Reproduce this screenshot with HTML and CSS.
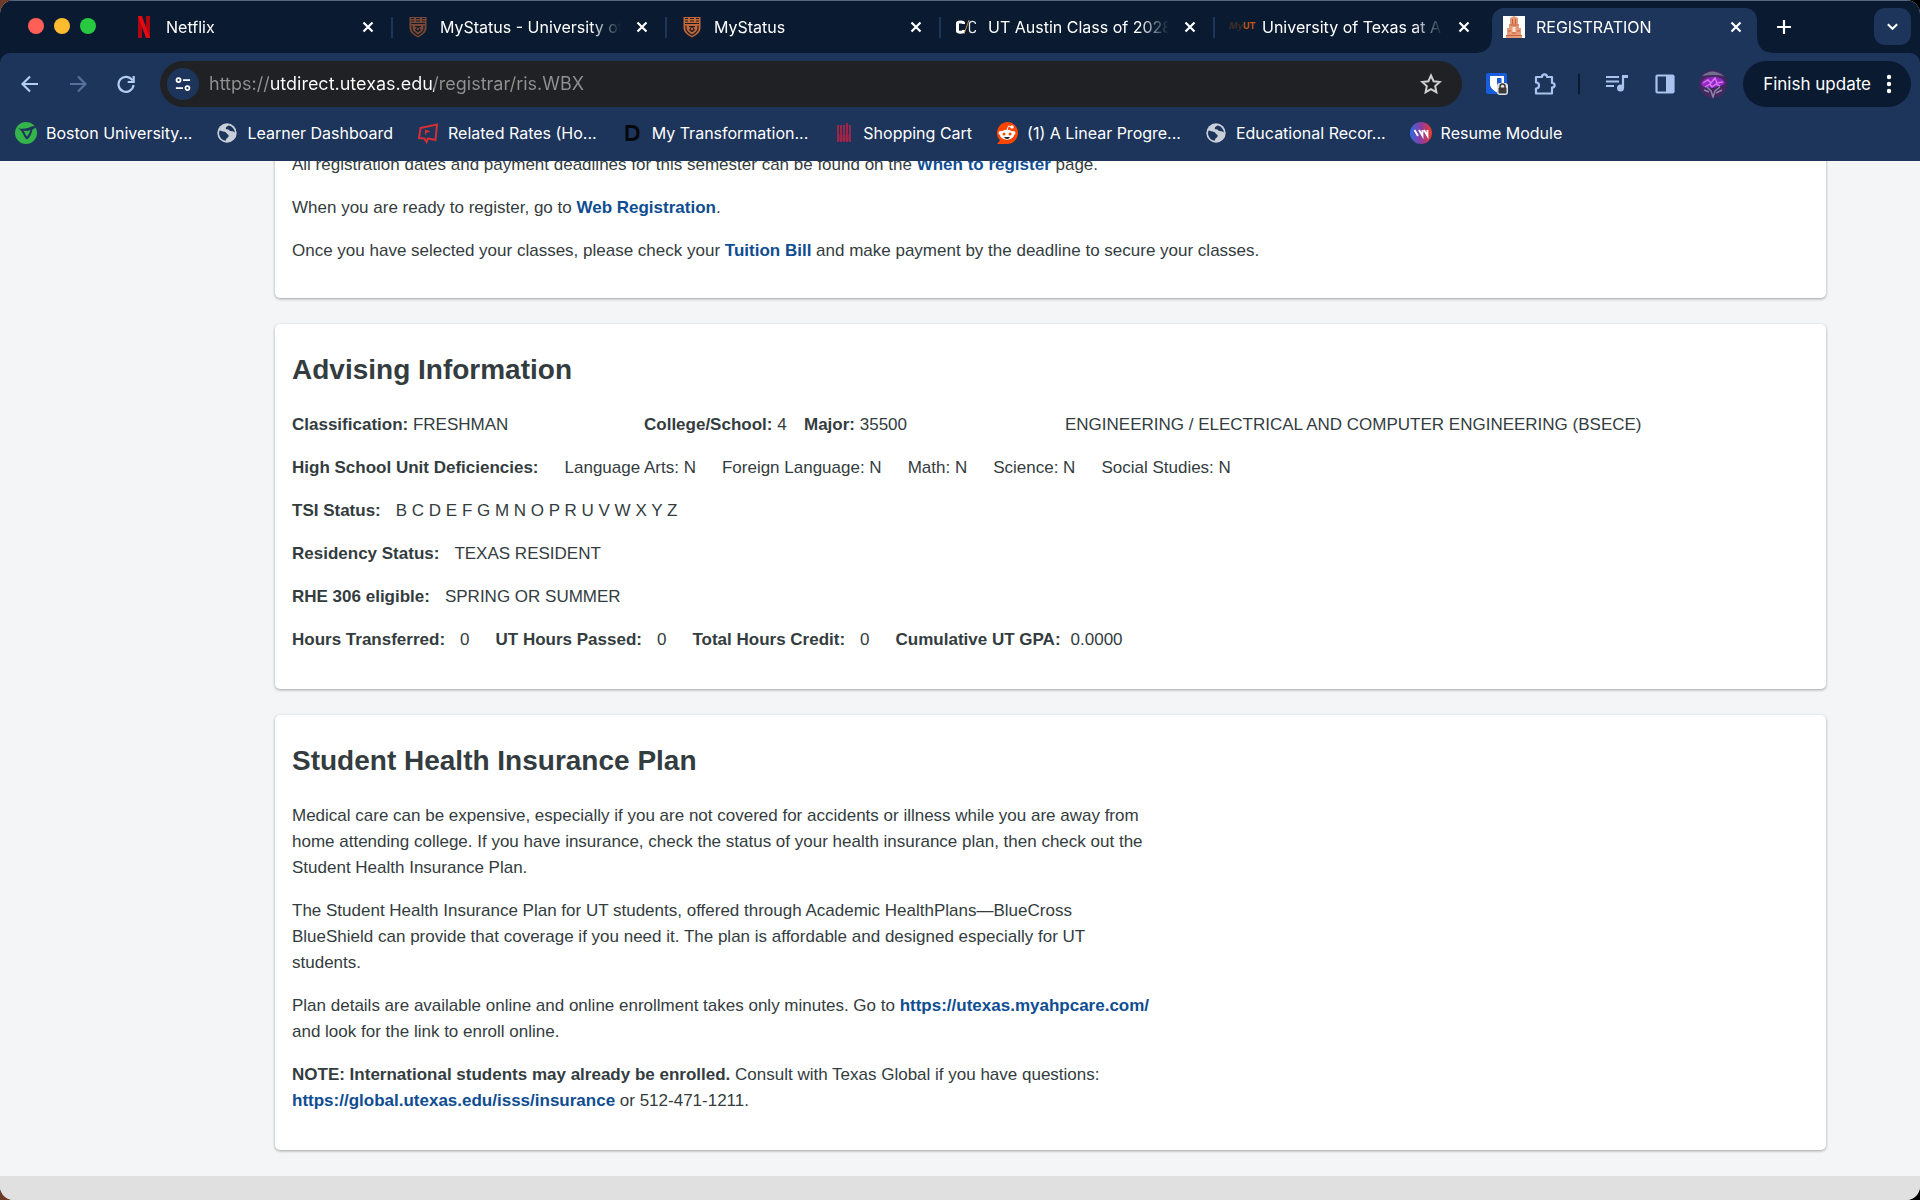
FILE: index.html
```html
<!DOCTYPE html>
<html lang="en">
<head>
  <meta charset="UTF-8">
  <meta name="viewport" content="width=device-width, initial-scale=1">
  <title>REGISTRATION</title>
  <link rel="stylesheet" href="styles.css">
</head>
<body>
  <!-- Shared icon shapes -->
  <svg class="sprite" aria-hidden="true">
    <symbol id="close" viewBox="0 0 12 12"><path d="M1.5 1.5l9 9M10.5 1.5l-9 9" stroke="currentColor" stroke-width="2.200" fill="none"/></symbol>
    <symbol id="shield" viewBox="0 0 22 22">
      <path d="M2.500 1h17v11c0 4.500-4.500 7.200-8.500 9.500C7 19.200 2.500 16.500 2.500 12z" fill="currentColor"/>
      <path d="M4 2.500h3M15 2.500h3M4 5h3M15 5h3M9 2.500h4M9 5h4M4 7.500h14M5 9.500v3c0 3 3 5 6 6.800 3-1.800 6-3.800 6-6.800v-3" stroke="#1b1d26" stroke-width="1.200" fill="none"/>
      <path d="M8 10.500h6M8 13.500l3 2.500 3-2.500" stroke="#1b1d26" fill="none"/>
      <circle cx="11" cy="13" r="1.800" stroke="#1b1d26" fill="none"/>
    </symbol>
    <symbol id="globe" viewBox="0 0 22 22">
      <circle cx="11" cy="11" r="9.700" fill="#c9d0da"/>
      <path d="M3.500 8.500c2 .2 3.500 1.200 5 1.300 2 .1 2 2.200 3.200 2.700 1.800.8.800 3-.7 3.500-1 .5-.6 2-1.500 2.700C5.500 18 3 14.500 3 11zM12.500 3.500c-1.500 1-2.800 1.500-2.700 3 .5 1.300 2.200.6 3.200 1.500.6 1.500 2.400 1 3.800 1.300l2.100 1.200C18.700 7 16 4 12.500 3.500z" fill="#1d355b"/>
    </symbol>
  </svg>

  <div class="window">
    <header class="chrome">
      <!-- Tab strip -->
      <div class="tab-strip">
        <div class="lights">
          <button class="light red" aria-label="Close window"></button>
          <button class="light yellow" aria-label="Minimize window"></button>
          <button class="light green" aria-label="Zoom window"></button>
        </div>
        <div class="tab">
          <svg class="favicon" viewBox="0 0 22 22"><path d="M5 0h4v22l-4 .5zM13 0h4v22.500L13 22z" fill="#b1060f"/><path d="M5 0h4l8 22.500-4-.5z" fill="#e50914"/></svg>
          <button class="tab-title">Netflix</button>
          <button class="tab-close" aria-label="Close tab"><svg><use href="#close"/></svg></button>
        </div>
        <div class="tab">
          <svg class="favicon shield dim"><use href="#shield"/></svg>
          <button class="tab-title">MyStatus - University of Texas</button>
          <button class="tab-close" aria-label="Close tab"><svg><use href="#close"/></svg></button>
        </div>
        <div class="tab">
          <svg class="favicon shield"><use href="#shield"/></svg>
          <button class="tab-title">MyStatus</button>
          <button class="tab-close" aria-label="Close tab"><svg><use href="#close"/></svg></button>
        </div>
        <div class="tab">
          <svg class="favicon" viewBox="0 0 22 22"><path d="M8.500 8V7c0-1.500-6-1.500-6 0v8c0 1.500 6 1.500 6 0v-1" stroke="#fff" stroke-width="3" fill="none"/><path d="M14 4L9 18" stroke="#c88a4a" stroke-width="1"/><path d="M20.500 8c0-3.500-6-3.500-6 0v6c0 3.500 6 3.500 6 0" stroke="#e4e7ec" stroke-width="1.300" fill="none"/></svg>
          <button class="tab-title">UT Austin Class of 2028</button>
          <button class="tab-close" aria-label="Close tab"><svg><use href="#close"/></svg></button>
        </div>
        <div class="tab last">
          <span class="favicon myut"><i>My</i>UT</span>
          <button class="tab-title">University of Texas at Austin</button>
          <button class="tab-close" aria-label="Close tab"><svg><use href="#close"/></svg></button>
        </div>
        <div class="tab active">
          <svg class="favicon" viewBox="0 0 22 22"><path d="M0 0h22v22H0z" fill="#fff"/><path d="M7 2l4-2 4 2v6h1v4h2v7h1v3H3v-3h1v-7h2V8h1z" fill="#e79a78"/><path d="M9.500 3v5M12.500 3v5M7 9h8M5 15h3M14 15h3M3 19.500h16M9 17h4" stroke="#c4603c" fill="none"/><path d="M9.500 11h3v5h-3z" fill="#fbe3d8"/></svg>
          <button class="tab-title">REGISTRATION</button>
          <button class="tab-close" aria-label="Close tab"><svg><use href="#close"/></svg></button>
        </div>
        <button class="new-tab" aria-label="New tab"><svg viewBox="0 0 14 14"><path d="M7 0v14M0 7h14" stroke="currentColor" stroke-width="2.200"/></svg></button>
        <button class="tab-search" aria-label="Search tabs"><svg viewBox="0 0 14 14"><path d="M2 4.500l5 5 5-5" stroke="currentColor" stroke-width="2.200" fill="none"/></svg></button>
      </div>

      <!-- Toolbar -->
      <div class="toolbar">
        <nav class="nav-buttons">
          <button aria-label="Back"><svg viewBox="0 0 18 18"><path d="M17 9H2M9 1.500L1.500 9 9 16.500" stroke="currentColor" stroke-width="2.200" fill="none"/></svg></button>
          <button class="disabled" aria-label="Forward" disabled><svg viewBox="0 0 18 18"><path d="M1 9h15M9 1.500L16.500 9 9 16.500" stroke="currentColor" stroke-width="2.200" fill="none"/></svg></button>
          <button aria-label="Reload"><svg viewBox="0 0 18 18"><path d="M15.500 5.500A7.500 7.500 0 1 0 16.500 10" stroke="currentColor" stroke-width="2.200" fill="none"/><path d="M16.700 1v6h-6" stroke="currentColor" stroke-width="2.200" fill="none"/></svg></button>
        </nav>
        <div class="omnibox">
          <button class="site-info" aria-label="Site information"><svg viewBox="0 0 18 16"><g stroke="#fff" stroke-width="2" fill="none"><circle cx="4" cy="3.500" r="2.300"/><path d="M9 3.500h8M1 12.500h8"/><circle cx="14" cy="12.500" r="2.300"/></g></svg></button>
          <input class="url" type="text" aria-label="Address" value="https://utdirect.utexas.edu/registrar/ris.WBX">
          <button class="star" aria-label="Bookmark this tab"><svg viewBox="0 0 22 22"><path d="M11 2.500l2.600 5.700 6.200.7-4.600 4.200 1.200 6.100L11 16.100l-5.400 3.100 1.200-6.100-4.600-4.200 6.200-.7z" stroke="currentColor" stroke-width="2" fill="none"/></svg></button>
        </div>
        <div class="extensions">
          <button aria-label="Password manager"><svg viewBox="0 0 22 22"><rect width="21" height="21" rx="2" fill="#175ddc"/><path d="M4 3h14v8c0 4-4 6.500-7 8.500-3-2-7-4.500-7-8.500z" fill="#fff"/><path d="M11 5v11.500c2.500-1.500 4.500-3 4.500-5.500V5z" fill="#175ddc"/><rect x="11" y="10" width="11" height="12" rx="3" fill="#e3e3e3"/><path d="M14 15v-1.500a2.500 2.500 0 0 1 5 0V15" stroke="#3b3b3b" stroke-width="1.500" fill="none"/><rect x="12.500" y="14.500" width="8" height="6" rx="1" fill="#3b3b3b"/></svg></button>
          <button aria-label="Extensions"><svg viewBox="0 0 22 22"><path d="M2 4h6c0-3.500 5-3.500 5 0h5v6c3.500 0 3.500 4.500 0 4.500V20.500H2v-5c4 0 4-6 0-6z" stroke="currentColor" stroke-width="2.200" stroke-linejoin="round" fill="none"/></svg></button>
          <span class="divider"></span>
          <button aria-label="Media controls"><svg viewBox="0 0 22 22"><path d="M0 4h13M0 8.500h13M0 13h8M17 3v12" stroke="currentColor" stroke-width="2.200"/><path d="M16 2h6v3h-6z" fill="currentColor"/><circle cx="14.500" cy="15" r="3.500" fill="currentColor"/></svg></button>
          <button aria-label="Side panel"><svg viewBox="0 0 22 22"><rect x="2.500" y="2.500" width="17" height="17" rx="1" stroke="currentColor" stroke-width="2.200" fill="none"/><path d="M12 2h8v18h-8z" fill="currentColor"/></svg></button>
          <button class="avatar" aria-label="Profile"><svg viewBox="0 0 28 28"><circle cx="14" cy="14" r="14" fill="#43285f"/><path d="M3 6q10-9 22 0-10-2-22 0" fill="#70708e"/><path d="M2 14q3-7 11-7 10-1 13 6-3 4-7 3-5 3-9 1-5 2-8-3" fill="#8f2bc2"/><path d="M4 13l5-3 3 3 4-5 2 5 6-1M6 17l5-3 2 3 4-3 4 2" stroke="#dc74f5" stroke-width="1.400" fill="none"/><path d="M8 17l4 4 2 6 2-6 5-4M5 20l5 2M23 20l-6 3" stroke="#8b84a6" stroke-width="1.500" fill="none"/></svg></button>
        </div>
        <button class="update">Finish update
          <svg viewBox="0 0 6 20"><g fill="currentColor"><circle cx="3" cy="3" r="2.200"/><circle cx="3" cy="10" r="2.200"/><circle cx="3" cy="17" r="2.200"/></g></svg>
        </button>
      </div>

      <!-- Bookmarks bar -->
      <nav class="bookmarks">
        <a href="#"><svg viewBox="0 0 22 22"><circle cx="11" cy="11" r="11" fill="#34b44a"/><path d="M3 6c5 2 10 0 15-2l4 1-4.500 2.500C16.500 12 15 15.500 12 17.500 8 15 9 10 3 6z" fill="#1d355b"/><path d="M8.500 8.500c2 .8 5 .3 7-.5-1 3-2 5-3.500 6.500C10.500 13 9.800 10.500 8.500 8.500z" fill="#34b44a"/></svg>Boston University...</a>
        <a href="#"><svg><use href="#globe"/></svg>Learner Dashboard</a>
        <a href="#"><svg viewBox="0 0 22 22"><path d="M3.500 6L20 2.500 18.500 18l-7.500-1.500-1.500 3.500-2-3.500L2 16z" stroke="#d32f35" stroke-width="2" fill="none"/><path d="M8 7.500l5.500 1.800-4 1.700-1.500 3z" fill="#d32f35"/></svg>Related Rates (Ho...</a>
        <a href="#"><svg viewBox="0 0 22 22"><path d="M6 4.500h4.500c4.500 0 6.500 2.500 6.500 6.500s-2 6.500-6.500 6.500H6z" stroke="#05070b" stroke-width="3" fill="none"/></svg>My Transformation...</a>
        <a href="#"><svg viewBox="0 0 22 22"><path d="M6 3v17M9 3v17M12 3v17M15 1v19M18 3v17" stroke="#a02447" stroke-width="2"/><path d="M5 13h14v6H5z" fill="#a02447" opacity=".6"/></svg>Shopping Cart</a>
        <a href="#"><svg viewBox="0 0 22 22"><path d="M11 0a11 11 0 1 1 0 22H1l3-3.500A11 11 0 0 1 11 0z" fill="#ff4500"/><path d="M11 8l1.500-4 3 1" stroke="#fff" fill="none"/><circle cx="16" cy="5" r="1.700" fill="#fff"/><circle cx="4.500" cy="11" r="2" fill="#fff"/><circle cx="17.500" cy="11" r="2" fill="#fff"/><ellipse cx="11" cy="12.800" rx="7" ry="5" fill="#fff"/><circle cx="8" cy="12" r="1.500" fill="#ff4500"/><circle cx="14" cy="12" r="1.500" fill="#ff4500"/><path d="M8 15h6c-1 2.500-5 2.500-6 0z" fill="#222"/></svg>(1) A Linear Progre...</a>
        <a href="#"><svg><use href="#globe"/></svg>Educational Recor...</a>
        <a href="#"><svg viewBox="0 0 22 22"><defs><linearGradient id="resume"><stop offset="0" stop-color="#2c6be0"/><stop offset=".5" stop-color="#8d3ca0"/><stop offset="1" stop-color="#ef3b2d"/></linearGradient></defs><circle cx="11" cy="11" r="11" fill="url(#resume)"/><path d="M4.500 8l3.500 6M9 8l3.500 6V8M14 8l3.500 6V8" stroke="#fff" stroke-width="1.800" fill="none"/></svg>Resume Module</a>
      </nav>
    </header>

    <!-- Page, scrolled down to the advising section -->
    <div class="page">
      <main class="content">
        <section class="card">
          <p>All registration dates and payment deadlines for this semester can be found on the <a href="#">When to register</a> page.</p>
          <p>When you are ready to register, go to <a href="#">Web Registration</a>.</p>
          <p>Once you have selected your classes, please check your <a href="#">Tuition Bill</a> and make payment by the deadline to secure your classes.</p>
        </section>

        <section class="card titled">
          <h2>Advising Information</h2>
          <div class="major-row">
            <span><b>Classification:</b> FRESHMAN</span>
            <span><b>College/School:</b> 4</span>
            <span><b>Major:</b> 35500</span>
            <span>ENGINEERING / ELECTRICAL AND COMPUTER ENGINEERING (BSECE)</span>
          </div>
          <div class="row">
            <b>High School Unit Deficiencies:</b>
            <span>Language Arts: N</span>
            <span>Foreign Language: N</span>
            <span>Math: N</span>
            <span>Science: N</span>
            <span>Social Studies: N</span>
          </div>
          <div class="row"><span class="pair"><b>TSI Status:</b> <span>B C D E F G M N O P R U V W X Y Z</span></span></div>
          <div class="row"><span class="pair"><b>Residency Status:</b> <span>TEXAS RESIDENT</span></span></div>
          <div class="row"><span class="pair"><b>RHE 306 eligible:</b> <span>SPRING OR SUMMER</span></span></div>
          <div class="row">
            <span class="pair"><b>Hours Transferred:</b> <span>0</span></span>
            <span class="pair"><b>UT Hours Passed:</b> <span>0</span></span>
            <span class="pair"><b>Total Hours Credit:</b> <span>0</span></span>
            <span class="pair gpa"><b>Cumulative UT GPA:</b> <span>0.0000</span></span>
          </div>
        </section>

        <section class="card titled">
          <h2>Student Health Insurance Plan</h2>
          <div class="prose">
            <p>Medical care can be expensive, especially if you are not covered for accidents or illness while you are away from home attending college. If you have insurance, check the status of your health insurance plan, then check out the Student Health Insurance Plan.</p>
            <p>The Student Health Insurance Plan for UT students, offered through Academic HealthPlans—BlueCross BlueShield can provide that coverage if you need it. The plan is affordable and designed especially for UT students.</p>
            <p>Plan details are available online and online enrollment takes only minutes. Go to <a href="#">https://utexas.myahpcare.com/</a> and look for the link to enroll online.</p>
            <p><b>NOTE: International students may already be enrolled.</b> Consult with Texas Global if you have questions: <a href="#">https://global.utexas.edu/isss/insurance</a> or 512-471-1211.</p>
          </div>
        </section>
      </main>
      <footer class="page-footer"></footer>
    </div>
  </div>
</body>
</html>
```
FILE: styles.css
```css
* {
  margin: 0;
  padding: 0;
  box-sizing: border-box;
}
body {
  background: linear-gradient(to right, #6d3a2a, #000);
}
button {
  border: none;
  background: none;
  color: inherit;
  font: inherit;
  cursor: pointer;
}
svg {
  display: block;
}
.sprite {
  position: absolute;
  width: 0;
  height: 0;
}
.window {
  display: flex;
  flex-direction: column;
  height: 100vh;
  border-radius: 14px;
  overflow: hidden;
  background: #f4f5f7;
}

/* Browser chrome */
.chrome {
  background: #0a1a30;
  border-top: 1px solid #56697f;
  color: #fff;
  font-family: Inter, "Liberation Sans", sans-serif;
  font-size: 16px;
}
.tab-strip {
  display: flex;
  height: 52px;
  padding: 7px 9px 0 28px;
}
.lights {
  display: flex;
  gap: 10px;
  width: 91px;
  padding-top: 10px;
}
.light {
  width: 16px;
  height: 16px;
  border-radius: 50%;
}
.red {
  background: #ff5f57;
}
.yellow {
  background: #febc2e;
}
.green {
  background: #28c840;
}
.tab {
  position: relative;
  display: flex;
  align-items: center;
  width: 274px;
  height: 38px;
  padding: 0 16px 0 14px;
}
.tab::after {
  content: "";
  position: absolute;
  right: 0;
  width: 2px;
  height: 21px;
  background: #1d355b;
}
.favicon {
  flex: none;
  width: 22px;
  height: 22px;
  margin-right: 11px;
}
.shield {
  color: #c4683a;
}
.dim {
  opacity: 0.6;
}
.myut {
  color: #c1590f;
  font-size: 9px;
  font-weight: 700;
  line-height: 20px;
}
.myut i {
  color: #3a2c2b;
}
.tab-title {
  flex: 1;
  overflow: hidden;
  white-space: nowrap;
  text-align: left;
  -webkit-mask-image: linear-gradient(to right, #000 calc(100% - 30px), transparent);
  mask-image: linear-gradient(to right, #000 calc(100% - 30px), transparent);
}
.tab-close {
  padding: 4px 3px 4px 15px;
}
.tab-close svg {
  width: 12px;
  height: 12px;
}
.tab.last::after {
  display: none;
}
.tab.active {
  width: 265px;
  height: 45px;
  margin-left: 3px;
  padding: 0 12px 7px 11px;
  border-radius: 12px 12px 0 0;
  background: #1d355b;
}
/* Curved feet of the active tab */
.tab.active::before,
.tab.active::after {
  content: "";
  position: absolute;
  bottom: 0;
  width: 14px;
  height: 14px;
}
.tab.active::before {
  left: -14px;
  background: radial-gradient(circle at 0 0, transparent 13px, #1d355b 14px);
}
.tab.active::after {
  right: -14px;
  background: radial-gradient(circle at 100% 0, transparent 13px, #1d355b 14px);
}
.new-tab {
  width: 38px;
  height: 38px;
  margin-left: 8px;
  padding: 12px;
}
.tab-search {
  width: 37px;
  height: 37px;
  margin-left: auto;
  padding: 12px;
  border-radius: 11px;
  background: #1d355b;
}
.toolbar {
  display: flex;
  align-items: center;
  height: 62px;
  padding: 0 9px 0 21px;
  border-radius: 10px 10px 0 0;
  background: #1d355b;
}
.nav-buttons {
  display: flex;
  gap: 30px;
  width: 139px;
  color: #b3cdf5;
}
.nav-buttons svg {
  width: 18px;
  height: 18px;
}
.disabled {
  color: #56709a;
}
.omnibox {
  display: flex;
  flex: 1;
  align-items: center;
  height: 46px;
  padding: 0 20px 0 7px;
  border-radius: 23px;
  background: #202124;
}
.site-info {
  width: 32px;
  height: 32px;
  padding: 8px;
  border-radius: 50%;
  background: #1d355b;
}
/* Only the host name is shown in white */
.url {
  flex: 1;
  margin-left: 10px;
  border: none;
  outline: none;
  background: linear-gradient(to right, #919191 61px, #fff 61px, #fff 225px, #919191 225px);
  -webkit-background-clip: text;
  background-clip: text;
  color: transparent;
  font-family: inherit;
  font-size: 18px;
  line-height: 32px;
}
.star {
  color: #cfcfcf;
}
.star svg,
.extensions svg {
  width: 22px;
  height: 22px;
}
.extensions {
  display: flex;
  align-items: center;
  gap: 26px;
  margin: 0 16px 0 24px;
  color: #a9c3ee;
}
.divider {
  width: 2px;
  height: 20px;
  margin: 0 0 0 -4px;
  background: #0a1a30;
}
.extensions .avatar {
  margin-left: -3px;
}
.extensions .avatar svg {
  width: 28px;
  height: 28px;
}
.update {
  display: flex;
  align-items: center;
  gap: 15px;
  height: 46px;
  padding: 0 19px 0 20px;
  border-radius: 23px;
  background: #0a1a30;
  font-size: 17px;
}
.update svg {
  width: 6px;
  height: 20px;
}
.bookmarks {
  display: flex;
  gap: 24px;
  height: 46px;
  padding: 7px 15px 0;
  background: #1d355b;
}
.bookmarks a {
  display: flex;
  gap: 9px;
  height: 22px;
  line-height: 22px;
  color: #fff;
  text-decoration: none;
  white-space: nowrap;
}
.bookmarks svg {
  width: 22px;
  height: 22px;
}

/* Page content */
.page {
  display: flex;
  flex: 1;
  flex-direction: column;
  min-height: 0;
  overflow: hidden;
  color: #333c3e;
  font-family: "Liberation Sans", Arial, sans-serif;
  font-size: 17px;
  line-height: 26px;
}
.content {
  flex: 1;
  margin: -9px 94px 0 275px;
}
.card {
  margin-bottom: 26px;
  padding: 0 17px 17px;
  border-radius: 5px;
  background: #fff;
  box-shadow: 0 1px 3px rgba(0, 0, 0, 0.35);
}
.card.titled {
  padding-top: 29px;
  padding-bottom: 19px;
}
.card h2 {
  margin-bottom: 25px;
  font-size: 28px;
  line-height: 34px;
}
.card p,
.row,
.major-row {
  margin-bottom: 17px;
}
.card a {
  color: #0f4d92;
  font-weight: 700;
  text-decoration: none;
}
.major-row {
  display: grid;
  grid-template-columns: 352px 160px 261px 1fr;
}
.row {
  display: flex;
  gap: 26px;
}
.pair {
  display: flex;
  gap: 15px;
}
.gpa {
  gap: 10px;
}
.prose {
  max-width: 860px;
}
.page-footer {
  height: 25px;
  background: #e0e0e0;
}
```
